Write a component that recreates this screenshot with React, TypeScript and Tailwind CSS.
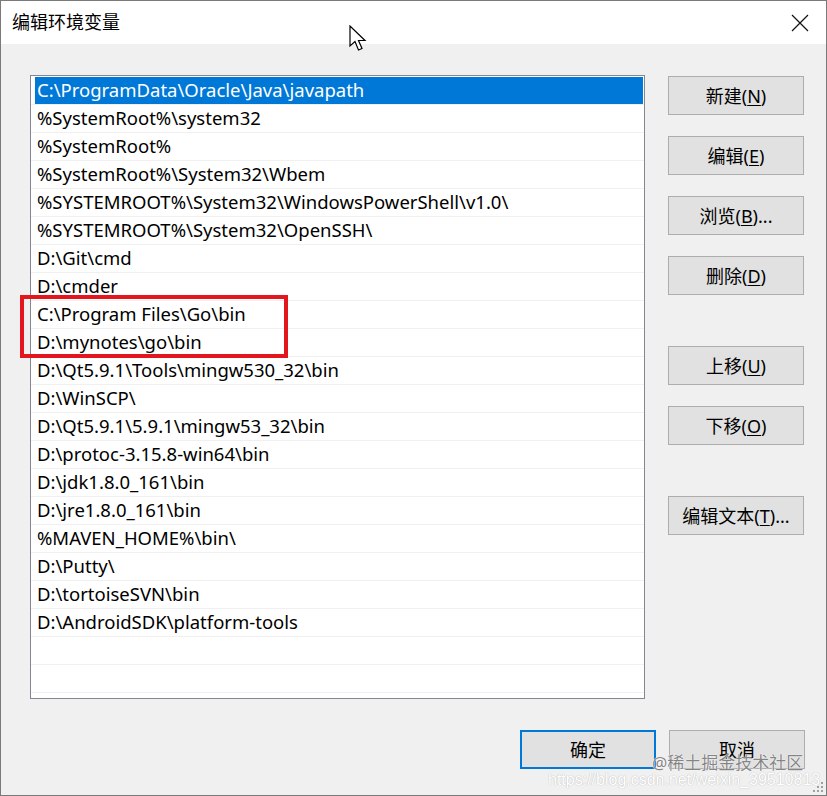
import React from "react";

const paths = [
  "C:\\ProgramData\\Oracle\\Java\\javapath",
  "%SystemRoot%\\system32",
  "%SystemRoot%",
  "%SystemRoot%\\System32\\Wbem",
  "%SYSTEMROOT%\\System32\\WindowsPowerShell\\v1.0\\",
  "%SYSTEMROOT%\\System32\\OpenSSH\\",
  "D:\\Git\\cmd",
  "D:\\cmder",
  "C:\\Program Files\\Go\\bin",
  "D:\\mynotes\\go\\bin",
  "D:\\Qt5.9.1\\Tools\\mingw530_32\\bin",
  "D:\\WinSCP\\",
  "D:\\Qt5.9.1\\5.9.1\\mingw53_32\\bin",
  "D:\\protoc-3.15.8-win64\\bin",
  "D:\\jdk1.8.0_161\\bin",
  "D:\\jre1.8.0_161\\bin",
  "%MAVEN_HOME%\\bin\\",
  "D:\\Putty\\",
  "D:\\tortoiseSVN\\bin",
  "D:\\AndroidSDK\\platform-tools",
  "",
  "",
];

const FONT = '"Noto Sans", "Noto Sans CJK SC", sans-serif';

function WinButton({ label, hotkey, tail = "", primary = false }: { label: string; hotkey: string; tail?: string; primary?: boolean }) {
  return (
    <div
      className={`flex h-[39px] w-[136px] items-center justify-center bg-[#e1e1e1] pt-[2px] text-[18px] text-black ${
        primary ? "border-2 border-[#0078d7]" : "border border-[#adadad]"
      }`}
    >
      <span>
        {label}
        {hotkey && (
          <>
            (<span className="underline underline-offset-2">{hotkey}</span>)
          </>
        )}
        {tail}
      </span>
    </div>
  );
}

function Cursor() {
  return (
    <svg className="absolute left-[348px] top-[24px]" width="20" height="28" viewBox="0 0 20 28">
      <path
        d="M1 1 L1 21 L6 16.5 L9.5 25 L13 23.5 L9.5 15.5 L16 15.5 Z"
        fill="#fff"
        stroke="#000"
        strokeWidth="1.2"
        strokeLinejoin="miter"
      />
    </svg>
  );
}

export default function App() {
  return (
    <div
      className="relative h-[796px] w-[827px] overflow-hidden border-t border-l border-r border-b border-[#7a7a7a] bg-[#f0f0f0]"
      style={{ fontFamily: FONT }}
    >
      {/* title bar */}
      <div className="flex h-[43px] items-center justify-between bg-white pl-[11px] pr-[16px]">
        <span className="text-[18px] text-black">编辑环境变量</span>
        <svg width="18" height="18" viewBox="0 0 18 18" className="mr-[1px]">
          <path d="M1 1 L17 17 M17 1 L1 17" stroke="#111" strokeWidth="1.2" />
        </svg>
      </div>
      <Cursor />

      <div className="flex pl-[29px] pt-[31px]">
        {/* list */}
        <div className="relative h-[624px] w-[615px] border border-[#828790] bg-white pt-[1px]">
          {paths.map((p, i) => (
            <div key={i} className="h-[28px] border-b border-[#f0f0f0]">
              <div
                className={`flex h-[27px] items-center pl-[2px] text-[18.5px] leading-none ${
                  i === 0 ? "ml-[4px] mr-[1px] bg-[#0078d7] text-white" : "ml-[4px] text-black"
                }`}
              >
                {p}
              </div>
            </div>
          ))}
          <div className="absolute left-[-11px] top-[219px] h-[63px] w-[268px] border-[4px] border-[#e3161d]" />
        </div>

        {/* buttons */}
        <div className="ml-[23px] flex flex-col pt-[1px]">
          <div className="flex flex-col gap-[21px]">
            <WinButton label="新建" hotkey="N" />
            <WinButton label="编辑" hotkey="E" />
            <WinButton label="浏览" hotkey="B" tail="..." />
            <WinButton label="删除" hotkey="D" />
          </div>
          <div className="mt-[51px] flex flex-col gap-[21px]">
            <WinButton label="上移" hotkey="U" />
            <WinButton label="下移" hotkey="O" />
          </div>
          <div className="mt-[51px]">
            <WinButton label="编辑文本" hotkey="T" tail="..." />
          </div>
        </div>
      </div>

      {/* bottom buttons */}
      <div className="mt-[31px] flex justify-end gap-[13px] pr-[21px]">
        <WinButton label="确定" hotkey="" primary />
        <WinButton label="取消" hotkey="" />
      </div>

      {/* watermark */}
      <div
        className="absolute left-[651px] top-[753px] text-[17px] leading-none text-[#6e6e6e]/85"
        style={{ textShadow: "0 0 1px #fff, 0 0 1px #fff" }}
      >
        @稀土掘金技术社区
      </div>
      <div
        className="absolute left-[547px] top-[771px] text-[16px] leading-none text-white"
        style={{ fontFamily: '"Liberation Sans", sans-serif', textShadow: "0 0 1px #c0c0c0, 0 0 1px #c0c0c0" }}
      >
        https://blog.csdn.net/weixin_39510813
      </div>

      {/* resize grip */}
      <svg className="absolute bottom-[2px] right-[2px]" width="12" height="12" viewBox="0 0 12 12">
        {[
          [9, 1],
          [5, 5],
          [9, 5],
          [1, 9],
          [5, 9],
          [9, 9],
        ].map(([x, y], i) => (
          <rect key={i} x={x} y={y} width="2" height="2" fill="#a0a0a0" />
        ))}
      </svg>
    </div>
  );
}
